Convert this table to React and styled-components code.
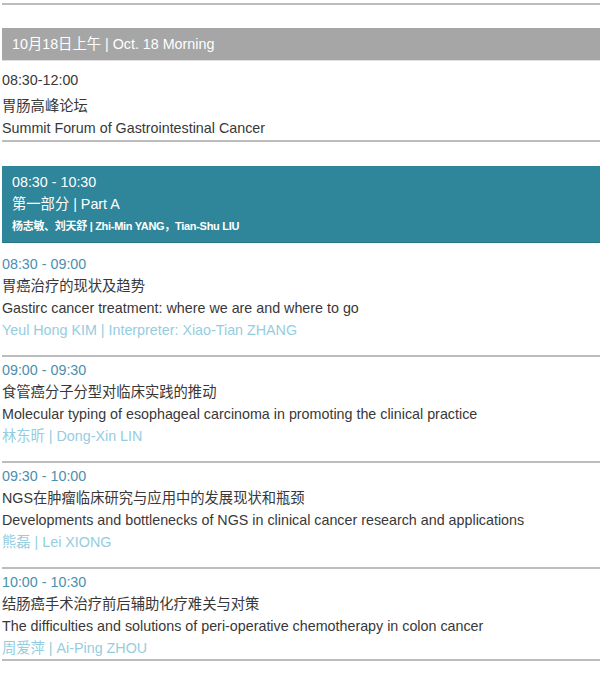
import React from 'react';
import styled, { createGlobalStyle } from 'styled-components';

const GlobalStyle = createGlobalStyle`
  html, body {
    margin: 0;
    padding: 0;
    background: #fff;
  }
  body {
    font-family: "Liberation Sans", Arial, "Noto Sans CJK SC", sans-serif;
    font-size: 14.3px;
    color: #383838;
  }
`;

const Page = styled.div`
  padding-left: 2px;
  padding-top: 3px;
  width: 598px;
`;

const Rule = styled.div`
  border-top: 2px solid #bdbdbd;
`;

const DayHeader = styled.div`
  margin-top: 23px;
  height: 32px;
  line-height: 32px;
  padding-left: 10px;
  background: #a6a6a6;
  border-bottom: 1px solid #dedede;
  color: #fff;
  font-size: 14.3px;
`;

const Forum = styled.div`
  padding: 8px 0 1px;
  border-bottom: 2px solid #bdbdbd;
`;

const Line = styled.div`
  line-height: 22px;
  font-size: 14.3px;
  color: ${(p) => p.color || '#383838'};
  margin-bottom: ${(p) => p.gap || 0}px;
  white-space: nowrap;
`;

const Session = styled.div`
  margin-top: 24px;
  margin-bottom: 8px;
  padding: 5px 10px;
  background: #2f8599;
  border-bottom: 1px solid #2a7689;
  color: #fff;
`;

const SessionChair = styled.div`
  line-height: 22px;
  font-size: 11px;
  font-weight: bold;
  letter-spacing: -0.3px;
  white-space: nowrap;
`;

const Talk = styled.div`
  padding: 2px 0 14px;
  border-bottom: 2px solid #bdbdbd;

  &:last-child {
    padding-bottom: 0;
  }
`;

const talks = [
  {
    time: '08:30 - 09:00',
    zh: '胃癌治疗的现状及趋势',
    en: 'Gastirc cancer treatment: where we are and where to go',
    speaker: 'Yeul Hong KIM | Interpreter: Xiao-Tian ZHANG',
  },
  {
    time: '09:00 - 09:30',
    zh: '食管癌分子分型对临床实践的推动',
    en: 'Molecular typing of esophageal carcinoma in promoting the clinical practice',
    speaker: '林东昕 | Dong-Xin LIN',
  },
  {
    time: '09:30 - 10:00',
    zh: 'NGS在肿瘤临床研究与应用中的发展现状和瓶颈',
    en: 'Developments and bottlenecks of NGS in clinical cancer research and applications',
    speaker: '熊磊 | Lei XIONG',
  },
  {
    time: '10:00 - 10:30',
    zh: '结肠癌手术治疗前后辅助化疗难关与对策',
    en: 'The difficulties and solutions of peri-operative chemotherapy in colon cancer',
    speaker: '周爱萍 | Ai-Ping ZHOU',
  },
];

export default function App() {
  return (
    <>
      <GlobalStyle />
      <Page>
        <Rule />
        <DayHeader>10月18日上午 | Oct. 18 Morning</DayHeader>
        <Forum>
          <Line gap={4}>08:30-12:00</Line>
          <Line>胃肠高峰论坛</Line>
          <Line>Summit Forum of Gastrointestinal Cancer</Line>
        </Forum>
        <Session>
          <Line color="#fff">08:30 - 10:30</Line>
          <Line color="#fff">第一部分 | Part A</Line>
          <SessionChair>杨志敏、刘天舒 | Zhi-Min YANG，Tian-Shu LIU</SessionChair>
        </Session>
        {talks.map((t) => (
          <Talk key={t.time}>
            <Line color="#4b8fae">{t.time}</Line>
            <Line>{t.zh}</Line>
            <Line>{t.en}</Line>
            <Line color="#95cde0">{t.speaker}</Line>
          </Talk>
        ))}
      </Page>
    </>
  );
}
